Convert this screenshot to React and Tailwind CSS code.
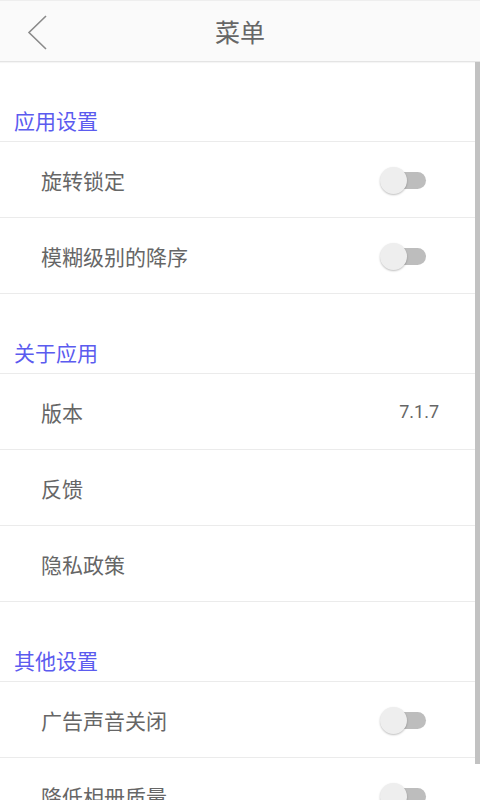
import React from "react";

const font = { fontFamily: '"Noto Sans CJK SC", "Noto Sans", sans-serif' };

function Toggle() {
  return (
    <div className="relative w-[48px] h-[28px] mr-[47px]">
      <div className="absolute left-[12px] top-[6px] w-[34px] h-[17px] rounded-full bg-[#bdbdbd]" />
      <div className="absolute left-0 top-[1px] w-[27px] h-[27px] rounded-full bg-[#eeeeee] shadow-[0_1px_2px_rgba(0,0,0,0.25)]" />
    </div>
  );
}

function SectionTitle({ children }) {
  return (
    <div className="h-[80px] flex items-end pl-[14px] pb-[7px] border-b border-[#ebebeb]">
      <span className="text-[21px] leading-[28px] text-[#5b5bef]">{children}</span>
    </div>
  );
}

function Row({ label, right }) {
  return (
    <div className="h-[76px] flex items-center justify-between pl-[41px] border-b border-[#ebebeb]">
      <span className="text-[21px] leading-[28px] text-[#666666]">{label}</span>
      {right}
    </div>
  );
}

export default function App() {
  return (
    <div className="w-[480px] h-[800px] overflow-hidden bg-white relative" style={font}>
      <div className="h-[62px] bg-[#fafafa] border-t border-[#eeeeee] border-b border-b-[#e4e4e4] shadow-[0_1px_1px_rgba(0,0,0,0.04)] flex items-center justify-center relative">
        <svg className="absolute left-[27px] top-[14px]" width="22" height="36" viewBox="0 0 22 36">
          <path d="M19 1 L2 17.5 L19 34" fill="none" stroke="#8a8a8a" strokeWidth="1.6" />
        </svg>
        <span className="text-[25px] leading-[32px] text-[#666666]">菜单</span>
      </div>
      <div className="absolute right-0 top-[62px] w-[5px] h-[702px] bg-[#c2c2c2]" />
      <div className="pr-[5px]">
        <SectionTitle>应用设置</SectionTitle>
        <Row label="旋转锁定" right={<Toggle />} />
        <Row label="模糊级别的降序" right={<Toggle />} />
        <SectionTitle>关于应用</SectionTitle>
        <Row label="版本" right={<span className="text-[18px] text-[#666666] mr-[36px]" style={{ fontFamily: '"Roboto", "Noto Sans", sans-serif' }}>7.1.7</span>} />
        <Row label="反馈" />
        <Row label="隐私政策" />
        <SectionTitle>其他设置</SectionTitle>
        <Row label="广告声音关闭" right={<Toggle />} />
        <Row label="降低相册质量" right={<Toggle />} />
      </div>
    </div>
  );
}
